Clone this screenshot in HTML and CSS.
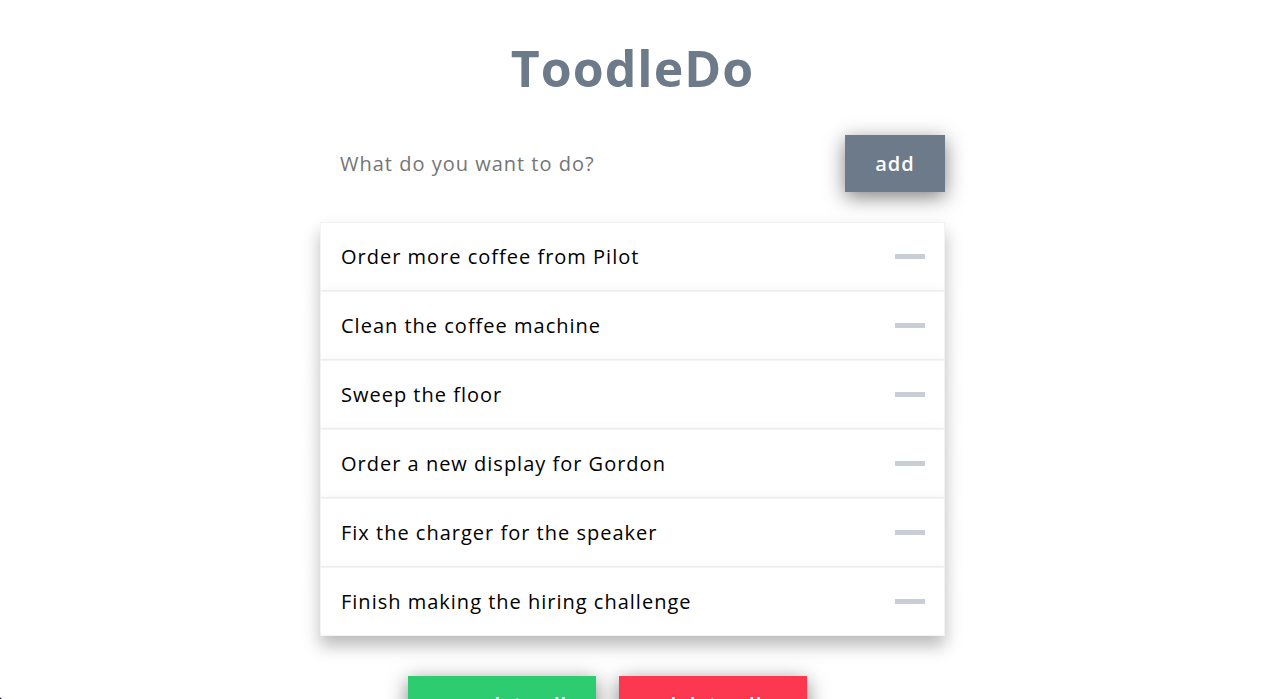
FILE: index.html
```
<!DOCTYPE html>
<html lang="en">
<head>
<meta charset="utf-8">
<title>ToodleDo</title>
<link rel="stylesheet" href="styles.css">
</head>
<body>
<main class="app">
  <h1 class="title">ToodleDo</h1>
  <form class="entry">
    <input class="entry-input" type="text" aria-label="New task" placeholder="What do you want to do?">
    <button class="button button-add" type="button">add</button>
  </form>
  <ul class="todos">
    <li class="todo"><span>Order more coffee from Pilot</span><button class="remove" type="button" aria-label="Remove"></button></li>
    <li class="todo"><span>Clean the coffee machine</span><button class="remove" type="button" aria-label="Remove"></button></li>
    <li class="todo"><span>Sweep the floor</span><button class="remove" type="button" aria-label="Remove"></button></li>
    <li class="todo"><span>Order a new display for Gordon</span><button class="remove" type="button" aria-label="Remove"></button></li>
    <li class="todo"><span>Fix the charger for the speaker</span><button class="remove" type="button" aria-label="Remove"></button></li>
    <li class="todo"><span>Finish making the hiring challenge</span><button class="remove" type="button" aria-label="Remove"></button></li>
  </ul>
  <div class="actions">
    <button class="button button-complete" type="button">complete all</button>
    <button class="button button-delete" type="button">delete all</button>
  </div>
</main>
<div class="corner"></div>
</body>
</html>
```
FILE: styles.css
```
* {
  box-sizing: border-box;
}

body {
  margin: 0;
  padding: 34px 0 40px 4px;
  background: #fff;
  color: #000;
  font-family: "Open Sans", "Noto Sans", sans-serif;
  font-size: 20px;
  line-height: 27px;
  letter-spacing: 1px;
}

.app {
  max-width: 625px;
  margin: 0 auto;
}

.title {
  margin: 0 0 33px;
  color: #6c7a89;
  font-size: 50px;
  line-height: 68px;
  text-align: center;
}

.entry {
  display: flex;
  margin-bottom: 30px;
}

.entry-input {
  flex: 1;
  min-width: 0;
  padding: 15px 20px;
  border: 0;
  background: transparent;
  color: #000;
  font: inherit;
  letter-spacing: inherit;
}

.entry-input::placeholder {
  color: #757575;
  opacity: 1;
}

.button {
  padding: 15px 20px;
  border: 0;
  color: #fff;
  font: inherit;
  font-weight: 600;
  letter-spacing: inherit;
  white-space: nowrap;
  box-shadow: 0 5px 20px rgba(0, 0, 0, 0.5);
}

.button-add {
  width: 100px;
  background: #6c7a89;
}

.todos {
  margin: 0 0 40px;
  padding: 0;
  list-style: none;
}

.todo {
  display: flex;
  align-items: center;
  justify-content: space-between;
  padding: 20px 19px 20px 20px;
  border: 1px solid #f3f3f3;
  background: #fff;
  box-shadow: 0 10px 16px rgba(0, 0, 0, 0.27);
}

.remove {
  width: 30px;
  height: 5px;
  padding: 0;
  border: 0;
  background: #c9cdd5;
}

.actions {
  display: flex;
  justify-content: center;
  gap: 23px;
  padding-right: 50px;
}

.actions .button {
  width: 188px;
}

.button-complete {
  background: #2ecc71;
}

.button-delete {
  background: #fc3850;
}

/* rounded window corner */
.corner {
  position: fixed;
  bottom: 0;
  left: 0;
  width: 4px;
  height: 4px;
  background: radial-gradient(circle at 100% 0, transparent 4px, #0a0a1e 5px);
}
```
